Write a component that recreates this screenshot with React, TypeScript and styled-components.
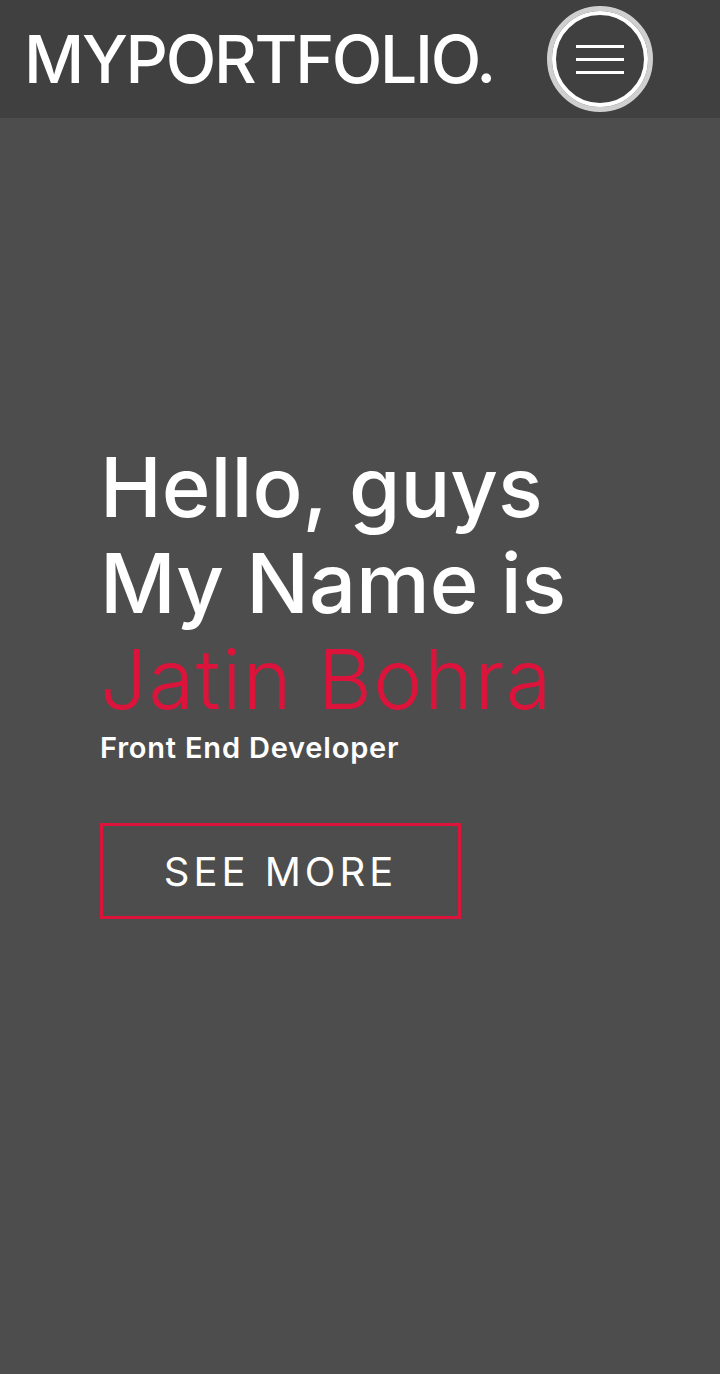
import { createGlobalStyle } from 'styled-components';
import styled from 'styled-components';

const GlobalStyle = createGlobalStyle`
  html, body {
    margin: 0;
    padding: 0;
    background: #4d4d4d;
  }
  body {
    font-family: Inter, 'DejaVu Sans', sans-serif;
    color: #fff;
  }
`;

const Page = styled.div`
  min-height: 1374px;
  display: flex;
  flex-direction: column;
  background: #4d4d4d;
`;

const Header = styled.header`
  height: 118px;
  background: #404040;
  display: flex;
  align-items: center;
  padding-left: 24px;
  box-sizing: border-box;
`;

const Logo = styled.div`
  font-size: 66px;
  font-weight: 500;
  letter-spacing: -2.3px;
  line-height: 1;
  color: #fff;
  width: 523px;
`;

const MenuButton = styled.button`
  width: 106px;
  height: 106px;
  border-radius: 50%;
  background: transparent;
  border: 5px solid #cfcfcf;
  padding: 0;
  display: flex;
  align-items: center;
  justify-content: center;
  box-sizing: border-box;
  cursor: pointer;
`;

const MenuInner = styled.span`
  width: 100%;
  height: 100%;
  border-radius: 50%;
  border: 4px solid #fff;
  box-sizing: border-box;
  display: flex;
  flex-direction: column;
  align-items: center;
  justify-content: center;
  gap: 10px;
`;

const Bar = styled.span`
  display: block;
  width: 48px;
  height: 3px;
  background: #fff;
`;

const Hero = styled.section`
  padding: 321px 0 0 100px;
`;

const Title = styled.h1`
  margin: 0;
  font-size: 83px;
  font-weight: 500;
  line-height: 96px;
  color: #fff;
`;

const Name = styled.span`
  display: block;
  color: #dc143c;
  font-weight: 300;
  letter-spacing: 1.5px;
`;

const Role = styled.p`
  margin: 5px 0 0;
  font-size: 29px;
  font-weight: 600;
  letter-spacing: 0.8px;
  line-height: 32px;
`;

const SeeMore = styled.a`
  margin-top: 59px;
  display: flex;
  align-items: center;
  justify-content: center;
  width: 361px;
  height: 96px;
  box-sizing: border-box;
  border: 3px solid #dc143c;
  color: #fff;
  font-size: 40px;
  font-weight: 400;
  letter-spacing: 4px;
  text-decoration: none;
`;

export default function App() {
  return (
    <Page>
      <GlobalStyle />
      <Header>
        <Logo>MYPORTFOLIO.</Logo>
        <MenuButton aria-label="menu">
          <MenuInner>
            <Bar />
            <Bar />
            <Bar />
          </MenuInner>
        </MenuButton>
      </Header>
      <Hero>
        <Title>
          Hello, guys
          <br />
          My Name is
          <Name>Jatin Bohra</Name>
        </Title>
        <Role>Front End Developer</Role>
        <SeeMore href="#">SEE MORE</SeeMore>
      </Hero>
    </Page>
  );
}
